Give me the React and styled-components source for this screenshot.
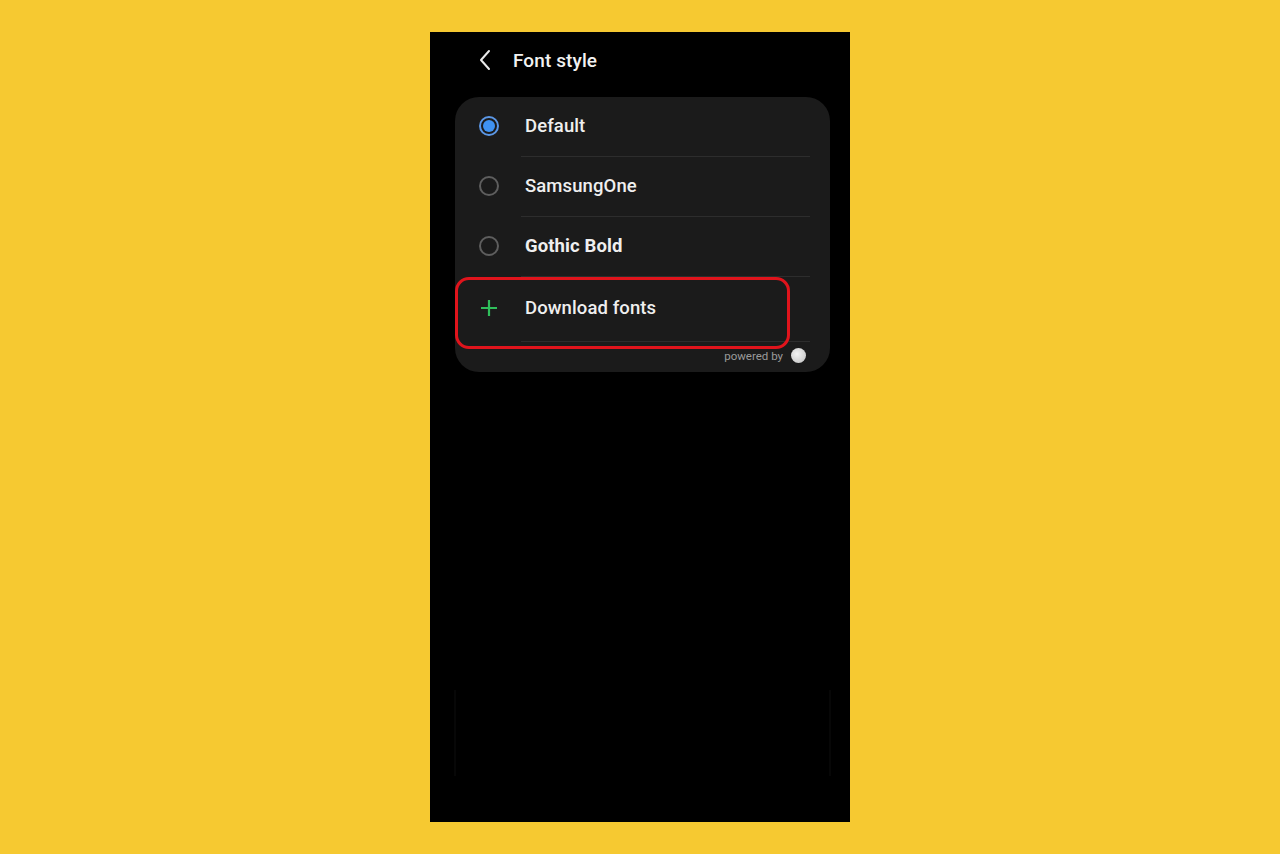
import React from "react";
import styled, { createGlobalStyle } from "styled-components";

const Global = createGlobalStyle`
  html, body { margin: 0; padding: 0; background: #f6c931; }
  body { font-family: Roboto, "Noto Sans", "Liberation Sans", sans-serif; }
`;

const Stage = styled.div`
  width: 1280px;
  height: 854px;
  display: flex;
  justify-content: center;
  padding-top: 32px;
  box-sizing: border-box;
`;

const Phone = styled.div`
  width: 420px;
  height: 790px;
  background: #000;
  display: flex;
  flex-direction: column;
  position: relative;
`;

const Header = styled.div`
  height: 56px;
  display: flex;
  align-items: center;
  padding-left: 49px;
  gap: 22px;
  color: #f2f2f2;
`;

const Title = styled.div`
  font-size: 19px;
  font-weight: 500;
  letter-spacing: 0.1px;
`;

const Card = styled.div`
  margin: 9px 20px 0 25px;
  background: #1b1b1b;
  border-radius: 24px;
  position: relative;
  display: flex;
  flex-direction: column;
  padding-bottom: 3px;
`;

const Row = styled.div`
  height: ${(p) => p.$h}px;
  display: flex;
  align-items: center;
  position: relative;
  box-sizing: border-box;
  padding-bottom: 2px;
`;

const Lead = styled.div`
  width: 70px;
  display: flex;
  justify-content: center;
  box-sizing: border-box;
  padding-right: 2px;
`;

const Radio = styled.span`
  width: 20px;
  height: 20px;
  border-radius: 50%;
  box-sizing: border-box;
  border: 2px solid ${(p) => (p.$on ? "#5b97e6" : "#5e5e5e")};
  display: flex;
  align-items: center;
  justify-content: center;
  &::after {
    content: "";
    display: ${(p) => (p.$on ? "block" : "none")};
    width: 12px;
    height: 12px;
    border-radius: 50%;
    background: #3f92f2;
  }
`;

const Label = styled.div`
  font-size: 18.5px;
  color: #efefef;
  font-weight: ${(p) => (p.$bold ? 700 : 500)};
  letter-spacing: 0.1px;
`;

const Divider = styled.div`
  height: 1px;
  background: #2d2d2d;
  margin: 0 20px 0 66px;
`;

const Highlight = styled.div`
  position: absolute;
  left: 0;
  top: 180px;
  width: 335px;
  height: 72px;
  border: 3px solid #e0141c;
  border-radius: 14px;
  box-sizing: border-box;
`;

const Powered = styled.div`
  height: 27px;
  display: flex;
  align-items: center;
  justify-content: flex-end;
  gap: 8px;
  padding-right: 24px;
  font-size: 11.5px;
  color: #9a9a9a;
`;

const Dot = styled.span`
  width: 15px;
  height: 15px;
  border-radius: 50%;
  background: radial-gradient(circle at 40% 40%, #f4f4f4, #bdbdbd);
`;

const Ghost = styled.div`
  position: absolute;
  top: 658px;
  width: 2px;
  height: 86px;
  background: #070707;
  left: ${(p) => p.$x}px;
`;

const items = [
  { label: "Default", on: true },
  { label: "SamsungOne" },
  { label: "Gothic Bold", bold: true },
];

export default function App() {
  return (
    <>
      <Global />
      <Stage>
        <Phone>
          <Header>
            <svg width="12" height="22" viewBox="0 0 12 22" fill="none">
              <path d="M10 2 L2 11 L10 20" stroke="#eaeaea" strokeWidth="2" strokeLinecap="round" strokeLinejoin="round" />
            </svg>
            <Title>Font style</Title>
          </Header>
          <Card>
            {items.map((it) => (
              <React.Fragment key={it.label}>
                <Row $h={59}>
                  <Lead>
                    <Radio $on={it.on} />
                  </Lead>
                  <Label $bold={it.bold}>{it.label}</Label>
                </Row>
                <Divider />
              </React.Fragment>
            ))}
            <Row $h={64}>
              <Lead>
                <svg width="18" height="18" viewBox="0 0 18 18">
                  <path d="M9 1 V17 M1 9 H17" stroke="#2fbf5b" strokeWidth="2.2" />
                </svg>
              </Lead>
              <Label>Download fonts</Label>
            </Row>
            <Divider />
            <Powered>
              <span>powered by</span>
              <Dot />
            </Powered>
            <Highlight />
          </Card>
          <Ghost $x={24} />
          <Ghost $x={399} />
        </Phone>
      </Stage>
    </>
  );
}
